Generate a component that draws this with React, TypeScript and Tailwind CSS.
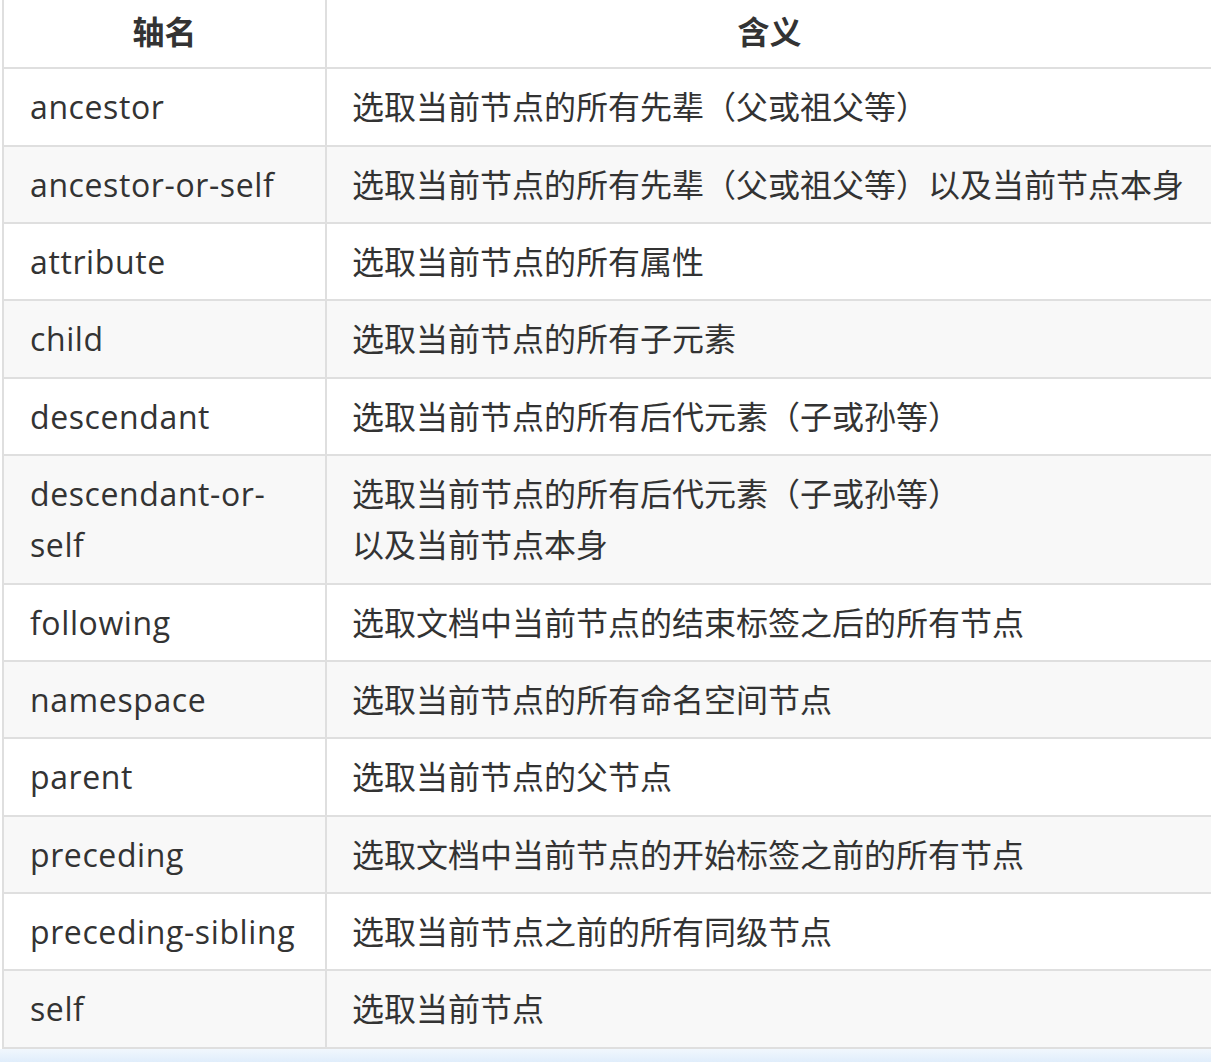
import React from "react";

const rows: [React.ReactNode, React.ReactNode][] = [
  ["ancestor", "选取当前节点的所有先辈（父或祖父等）"],
  ["ancestor-or-self", "选取当前节点的所有先辈（父或祖父等）以及当前节点本身"],
  ["attribute", "选取当前节点的所有属性"],
  ["child", "选取当前节点的所有子元素"],
  ["descendant", "选取当前节点的所有后代元素（子或孙等）"],
  [
    "descendant-or-self",
    <>
      选取当前节点的所有后代元素（子或孙等）
      <br />
      以及当前节点本身
    </>,
  ],
  ["following", "选取文档中当前节点的结束标签之后的所有节点"],
  ["namespace", "选取当前节点的所有命名空间节点"],
  ["parent", "选取当前节点的父节点"],
  ["preceding", "选取文档中当前节点的开始标签之前的所有节点"],
  ["preceding-sibling", "选取当前节点之前的所有同级节点"],
  ["self", "选取当前节点"],
];

export default function App() {
  return (
    <div
      className="w-[1211px] h-[1062px] overflow-hidden bg-white text-[#333333]"
      style={{ fontFamily: '"Open Sans", "Noto Sans CJK SC", sans-serif' }}
    >
      <table className="ml-[2px] w-[1212px] border-collapse text-[32px] leading-[51.33px] table-fixed">
        <colgroup>
          <col className="w-[323px]" />
          <col />
        </colgroup>
        <thead>
          <tr>
            <th className="h-[67px] border-x-2 border-b-2 border-[#dfdfdf] px-[25px] pt-[6px] pb-[10px] text-center font-bold">
              轴名
            </th>
            <th className="h-[67px] border-x-2 border-b-2 border-[#dfdfdf] px-[25px] pt-[6px] pb-[10px] text-center font-bold">
              含义
            </th>
          </tr>
        </thead>
        <tbody>
          {rows.map(([a, b], i) => (
            <tr key={i} className={i % 2 === 1 ? "bg-[#f8f8f8]" : "bg-white"}>
              <td className="border-2 border-[#dfdfdf] pl-[26px] pr-[14px] py-[12px] align-middle tracking-[0.6px]">
                {a}
              </td>
              <td className="border-2 border-[#dfdfdf] pl-[25px] pr-[10px] py-[12px] align-middle whitespace-nowrap">
                {b}
              </td>
            </tr>
          ))}
        </tbody>
      </table>
      <div className="h-[16px] bg-gradient-to-b from-[#f1f7fd] to-[#dcebfb]" />
    </div>
  );
}
